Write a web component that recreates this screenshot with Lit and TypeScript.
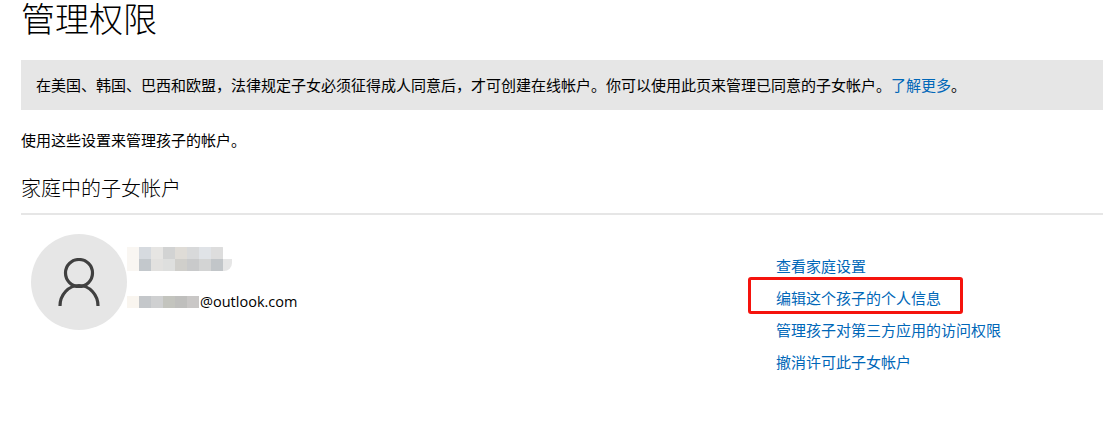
import { LitElement, html, css } from "lit";
import { customElement } from "lit/decorators.js";

const nameRows = [
  ["#f9f6f2", "#d6dadf", "#e6e5e3", "#d2d3d3", "#dfdcd7", "#d8d9da", "#e0e3e7", "#dddddd"],
  ["#f9f6f2", "#c3c8cc", "#e2e1df", "#dedfde", "#d0cfcb", "#c9cacb", "#d3d4d4", "#c2c6c9", "#e6e6e6"],
];
const mailRow = ["#f9f5ef", "#c4c7ca", "#cfd0d1", "#c3c4be", "#bfbfbd", "#c9c7c6"];

@customElement("app-root")
export class AppRoot extends LitElement {
  static styles = css`
    :host {
      display: block;
      width: 1103px;
      height: 438px;
      overflow: hidden;
      background: #fff;
      color: #000;
      font-family: "Open Sans", "Noto Sans CJK SC", sans-serif;
      font-size: 15px;
    }
    .page { display: flex; flex-direction: column; padding-left: 21px; }
    h1 {
      margin: 0;
      height: 60px;
      font-size: 34px;
      font-weight: 300;
      line-height: 35px;
      font-family: "Noto Sans CJK SC", sans-serif;
    }
    .banner {
      height: 50px;
      background: #e6e6e6;
      display: flex;
      align-items: center;
      padding-left: 15px;
      line-height: 20px;
      font-family: "Noto Sans CJK SC", sans-serif;
    }
    a { color: #0067b8; text-decoration: none; }
    .intro {
      margin: 19px 0 0;
      height: 22px;
      line-height: 22px;
      font-family: "Noto Sans CJK SC", sans-serif;
    }
    h2 {
      margin: 22px 0 0;
      height: 40px;
      line-height: 30px;
      font-size: 20px;
      font-weight: 300;
      border-bottom: 2px solid #e6e6e6;
      font-family: "Noto Sans CJK SC", sans-serif;
    }
    .child {
      display: flex;
      padding: 19px 0 0 10px;
    }
    .avatar {
      width: 96px;
      height: 96px;
      border-radius: 50%;
      background: #e6e6e6;
      flex: none;
      display: flex;
      align-items: center;
      justify-content: center;
    }
    .who {
      width: 649px;
      flex: none;
      display: flex;
      flex-direction: column;
    }
    .name {
      margin: 13px 0 0 0;
      width: 105px;
      height: 24px;
      overflow: hidden;
      border-radius: 0 10px 8px 0;
      display: flex;
      flex-direction: column;
    }
    .mosaic { display: flex; height: 12px; }
    .mosaic i { display: block; width: 12px; height: 12px; flex: none; }
    .mail {
      display: flex;
      align-items: center;
      margin-top: 20px;
      height: 22px;
      line-height: 22px;
      font-size: 14.5px;
    }
    .mail .mosaic { width: 73px; }
    .links {
      display: flex;
      flex-direction: column;
      padding-top: 16px;
      font-family: "Noto Sans CJK SC", sans-serif;
    }
    .links a { height: 32px; line-height: 32px; white-space: nowrap; }
    .mark {
      position: absolute;
      left: 748px;
      top: 277px;
      width: 209px;
      height: 31px;
      border: 3px solid #f5130d;
      border-radius: 3px;
    }
  `;

  render() {
    return html`
      <div class="page">
        <h1>管理权限</h1>
        <div class="banner">
          <span>在美国、韩国、巴西和欧盟，法律规定子女必须征得成人同意后，才可创建在线帐户。你可以使用此页来管理已同意的子女帐户。<a href="#">了解更多</a>。</span>
        </div>
        <p class="intro">使用这些设置来管理孩子的帐户。</p>
        <h2>家庭中的子女帐户</h2>
        <div class="child">
          <div class="avatar">
            <svg width="48" height="48" viewBox="0 0 48 48" fill="none" stroke="#404040" stroke-width="3.2">
              <circle cx="24" cy="15" r="13.5"></circle>
              <path d="M5 48A19 20.500 0 0 1 43 48"></path>
            </svg>
          </div>
          <div class="who">
            <div class="name">
              ${nameRows.map(
                (r) => html`<div class="mosaic">${r.map((c) => html`<i style="background:${c}"></i>`)}</div>`
              )}
            </div>
            <div class="mail">
              <div class="mosaic">${mailRow.map((c) => html`<i style="background:${c}"></i>`)}</div>
              <span>@outlook.com</span>
            </div>
          </div>
          <div class="links">
            <a href="#">查看家庭设置</a>
            <a href="#">编辑这个孩子的个人信息</a>
            <a href="#">管理孩子对第三方应用的访问权限</a>
            <a href="#">撤消许可此子女帐户</a>
          </div>
        </div>
      </div>
      <div class="mark"></div>
    `;
  }
}
